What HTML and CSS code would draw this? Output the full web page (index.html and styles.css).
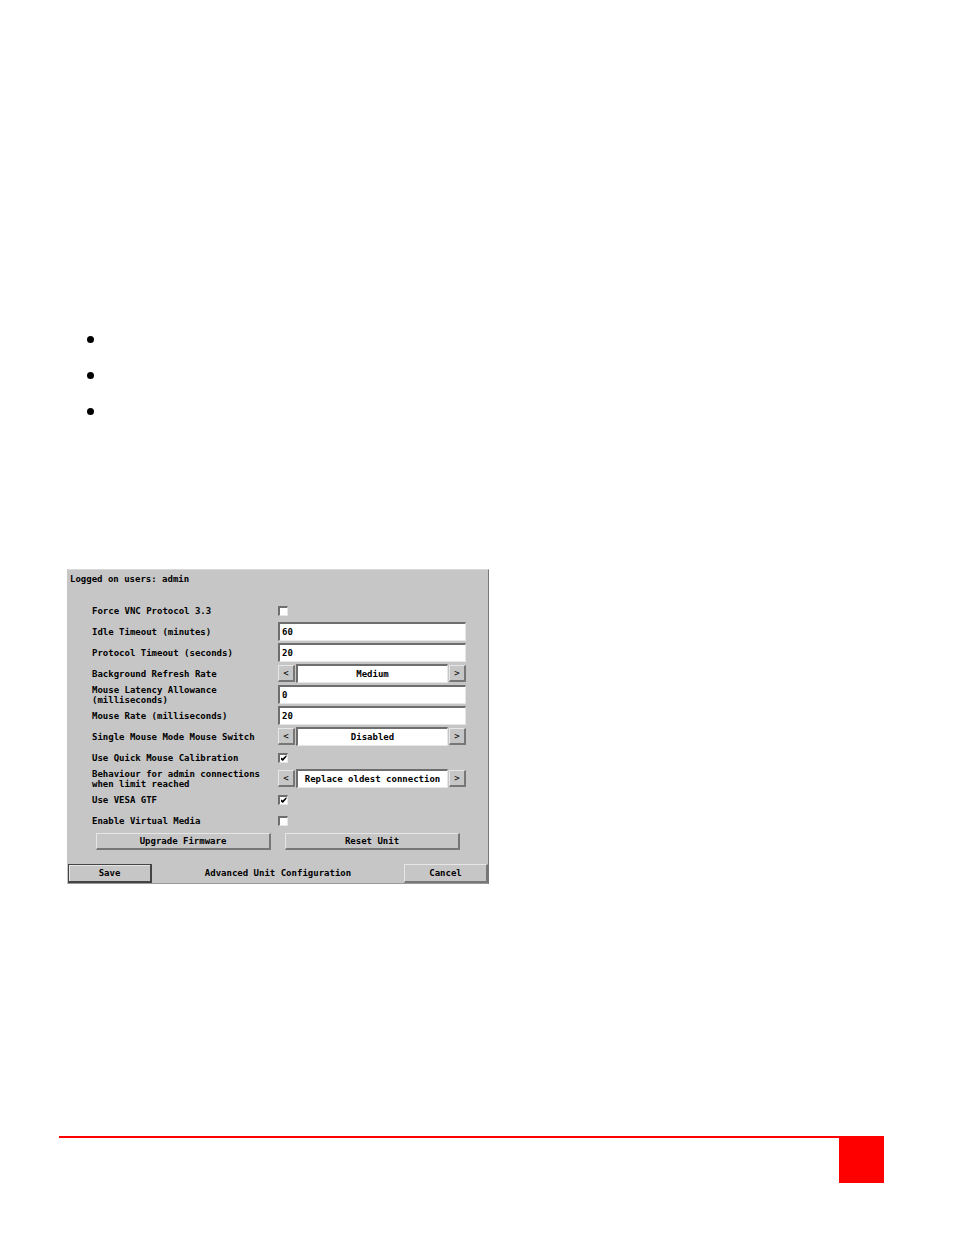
FILE: index.html
```html
<!DOCTYPE html>
<html lang="en">
<head>
    <meta charset="UTF-8">
    <meta name="viewport" content="width=device-width, initial-scale=1.0">
    <title>Advanced Unit Configuration</title>
    <link rel="stylesheet" href="styles.css">
</head>
<body>
    <main>
        <ul class="notes">
            <li></li>
            <li></li>
            <li></li>
        </ul>

        <form class="panel">
            <p class="users">Logged on users: admin</p>

            <div class="settings">
                <div class="row">
                    <label for="forceVnc">Force VNC Protocol 3.3</label>
                    <input type="checkbox" id="forceVnc">
                </div>
                <div class="row">
                    <label for="idleTimeout">Idle Timeout (minutes)</label>
                    <input type="text" id="idleTimeout" value="60">
                </div>
                <div class="row">
                    <label for="protocolTimeout">Protocol Timeout (seconds)</label>
                    <input type="text" id="protocolTimeout" value="20">
                </div>
                <div class="row">
                    <label for="refreshRate">Background Refresh Rate</label>
                    <div class="stepper">
                        <button type="button">&lt;</button>
                        <input type="text" id="refreshRate" value="Medium" readonly>
                        <button type="button">&gt;</button>
                    </div>
                </div>
                <div class="row">
                    <label for="mouseLatency">Mouse Latency Allowance<br>(milliseconds)</label>
                    <input type="text" id="mouseLatency" value="0">
                </div>
                <div class="row">
                    <label for="mouseRate">Mouse Rate (milliseconds)</label>
                    <input type="text" id="mouseRate" value="20">
                </div>
                <div class="row">
                    <label for="mouseSwitch">Single Mouse Mode Mouse Switch</label>
                    <div class="stepper">
                        <button type="button">&lt;</button>
                        <input type="text" id="mouseSwitch" value="Disabled" readonly>
                        <button type="button">&gt;</button>
                    </div>
                </div>
                <div class="row">
                    <label for="quickCalibration">Use Quick Mouse Calibration</label>
                    <input type="checkbox" id="quickCalibration" checked>
                </div>
                <div class="row">
                    <label for="adminLimit">Behaviour for admin connections<br>when limit reached</label>
                    <div class="stepper">
                        <button type="button">&lt;</button>
                        <input type="text" id="adminLimit" value="Replace oldest connection" readonly>
                        <button type="button">&gt;</button>
                    </div>
                </div>
                <div class="row">
                    <label for="vesaGtf">Use VESA GTF</label>
                    <input type="checkbox" id="vesaGtf" checked>
                </div>
                <div class="row">
                    <label for="virtualMedia">Enable Virtual Media</label>
                    <input type="checkbox" id="virtualMedia">
                </div>
            </div>

            <div class="actions">
                <button type="button">Upgrade Firmware</button>
                <button type="button">Reset Unit</button>
            </div>

            <div class="bottom">
                <button type="submit" class="save">Save</button>
                <span>Advanced Unit Configuration</span>
                <button type="button">Cancel</button>
            </div>
        </form>
    </main>

    <footer>
        <div class="line"></div>
        <div class="page-box"></div>
    </footer>
</body>
</html>
```

FILE: styles.css
```css
* {
    box-sizing: border-box;
}
body {
    display: flex;
    flex-direction: column;
    min-height: 100vh;
    margin: 0;
    padding: 321px 70px 52px 59px;
    background: #fff;
    color: #000;
}
.notes {
    margin: 0 0 140px;
    padding: 0 0 0 28px;
    list-style: none;
}
.notes li {
    display: flex;
    align-items: center;
    height: 36px;
}
.notes li::before {
    content: "";
    width: 7px;
    height: 7px;
    border-radius: 50%;
    background: #000;
}
.panel {
    max-width: 422px;
    margin-left: 8px;
    background: #c6c6c6;
    border: 1px solid;
    border-color: #d8d8d8 #777 #999 #c6c6c6;
    font: bold 9px/11px "DejaVu Sans Mono", monospace;
}
.panel input,
.panel button {
    margin: 0;
    font: inherit;
    color: inherit;
}
.users {
    margin: 0;
    padding: 4px 2px 15px;
}
.settings {
    padding: 0 22px 0 24px;
}
.row {
    display: grid;
    grid-template-columns: 186px 1fr;
    align-items: center;
    height: 21px;
}
label {
    line-height: 10px;
    white-space: nowrap;
}
input[type="text"] {
    width: 100%;
    min-width: 0;
    height: 19px;
    padding: 0 2px;
    background: #fff;
    border: 1px solid;
    border-color: #6e6e6e #e6e6e6 #e6e6e6 #6e6e6e;
    border-width: 2px 1px 1px 2px;
    border-radius: 0;
    outline: none;
}
input[type="checkbox"] {
    appearance: none;
    display: grid;
    place-items: center;
    width: 10px;
    height: 10px;
    background: #fff;
    border: 1px solid;
    border-color: #6e6e6e #e6e6e6 #e6e6e6 #6e6e6e;
    border-width: 2px 1px 1px 2px;
}
input[type="checkbox"]:checked::before {
    content: "";
    width: 6px;
    height: 6px;
    background: #000;
    clip-path: polygon(0 35%, 35% 60%, 100% 0, 100% 30%, 40% 100%, 0 70%);
}
button {
    height: 17px;
    padding: 0;
    background: #c6c6c6;
    border: 1px solid;
    border-color: #e6e6e6 #777 #777 #e6e6e6;
    border-width: 1px 2px 2px 1px;
    border-radius: 0;
}
.stepper {
    display: flex;
    align-items: center;
    gap: 1px;
}
.panel .stepper button {
    flex: 0 0 17px;
    font-weight: normal;
}
.stepper input[type="text"] {
    flex: 1;
    text-align: center;
}
.actions {
    display: grid;
    grid-template-columns: 1fr 1fr;
    gap: 14px;
    padding: 2px 28px 0;
}
.bottom {
    display: grid;
    grid-template-columns: 84px 1fr 84px;
    align-items: center;
    margin-top: 14px;
    text-align: center;
}
.bottom button {
    height: 19px;
}
.bottom .save {
    border-color: #444;
    box-shadow: inset 1px 1px #e6e6e6;
}
footer {
    display: flex;
    margin-top: auto;
}
.line {
    flex: 1;
    height: 2px;
    background: #f00;
}
.page-box {
    width: 45px;
    height: 47px;
    background: #f00;
}
```
